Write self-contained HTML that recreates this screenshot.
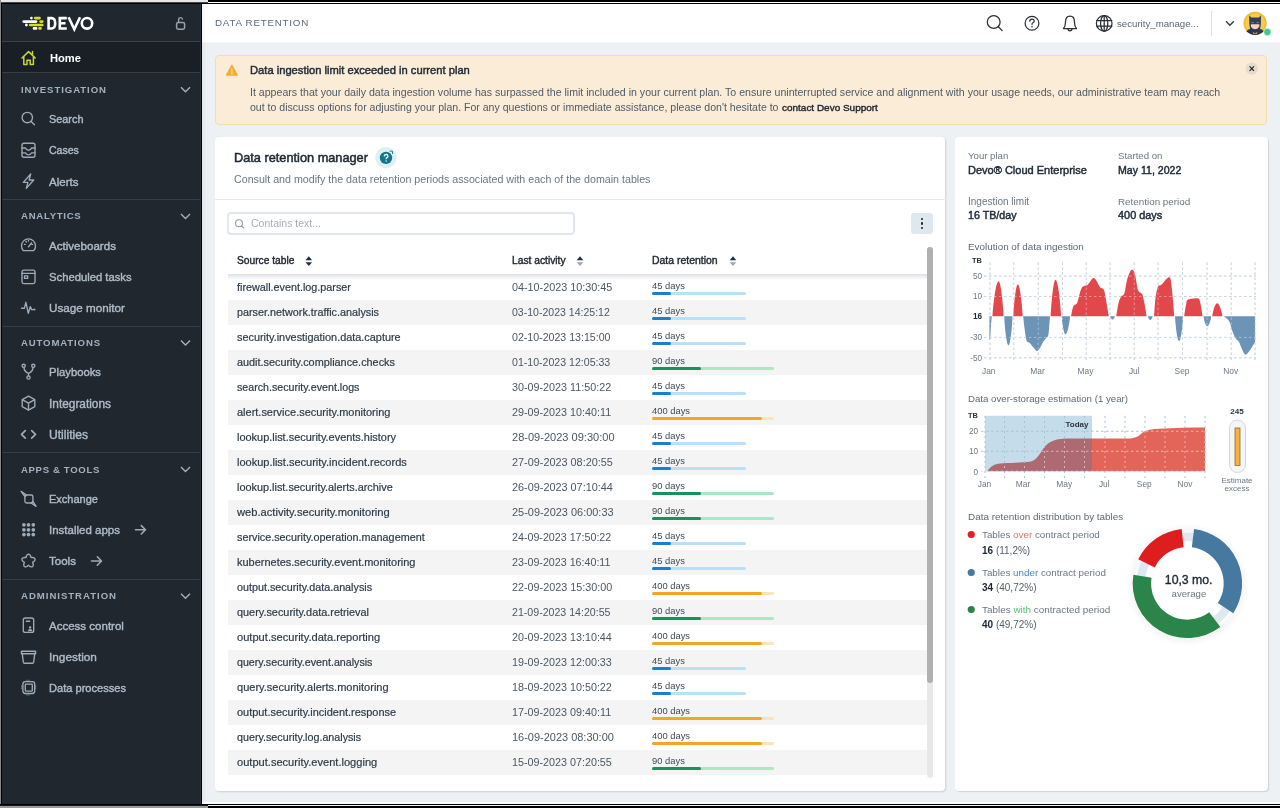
<!DOCTYPE html>
<html><head><meta charset="utf-8"><style>
html,body{margin:0;padding:0;}
body{width:1280px;height:808px;position:relative;overflow:hidden;background:#eef1f4;font-family:"Liberation Sans",sans-serif;}
.t{position:absolute;white-space:nowrap;will-change:transform;}
.r{position:absolute;}
svg{position:absolute;overflow:visible;}
</style></head><body>
<div class="r" style="left:0px;top:0px;width:208px;height:2px;background:#e8e8e8;"></div>
<div class="r" style="left:208px;top:0px;width:1072px;height:2px;background:#000;"></div>
<div class="r" style="left:0px;top:2px;width:208px;height:1px;background:#4a4a4a;"></div>
<div class="r" style="left:208px;top:2px;width:1072px;height:1px;background:#fff;"></div>
<div class="r" style="left:0px;top:3px;width:1280px;height:1px;background:#000;"></div>
<div class="r" style="left:0px;top:0px;width:1px;height:808px;background:#8a8a8a;"></div>
<div class="r" style="left:1px;top:3px;width:1px;height:802px;background:#000;"></div>
<div class="r" style="left:202px;top:802px;width:1078px;height:2px;background:#ffffff;"></div>
<div class="r" style="left:0px;top:804px;width:1280px;height:1px;background:#000;"></div>
<div class="r" style="left:0px;top:805px;width:208px;height:1px;background:#1a1a1a;"></div>
<div class="r" style="left:208px;top:805px;width:1072px;height:1px;background:#f4f4f4;"></div>
<div class="r" style="left:0px;top:806px;width:208px;height:2px;background:#9a9a9a;"></div>
<div class="r" style="left:208px;top:806px;width:1072px;height:2px;background:#000;"></div>
<div class="r" style="left:202px;top:4px;width:1078px;height:38px;background:#fff;"></div>
<div class="r" style="left:202px;top:42px;width:1078px;height:1px;background:#f5f7f9;"></div>
<div class="r" style="left:202px;top:43px;width:1078px;height:1px;background:#eceff2;"></div>
<div class="r" style="left:2px;top:4px;width:198px;height:800px;background:#20272f;box-shadow:3px 0 6px rgba(0,0,0,0.06);"></div>
<div class="r" style="left:200px;top:4px;width:1px;height:800px;background:#2b333b;"></div>
<div class="r" style="left:201px;top:4px;width:1px;height:800px;background:#000;"></div>
<div class="r" style="left:2px;top:41px;width:198px;height:1px;background:#3a434c;"></div>
<div class="r" style="left:2px;top:42px;width:198px;height:30px;background:#1a1f26;"></div>
<div class="r" style="left:2px;top:72px;width:198px;height:1px;background:#353e47;"></div>
<div class="r" style="left:2px;top:199px;width:198px;height:1px;background:#353e47;"></div>
<div class="r" style="left:2px;top:326px;width:198px;height:1px;background:#353e47;"></div>
<div class="r" style="left:2px;top:452px;width:198px;height:1px;background:#353e47;"></div>
<div class="r" style="left:2px;top:579px;width:198px;height:1px;background:#353e47;"></div>
<svg style="left:0;top:0" width="100" height="40"><circle cx="31.4" cy="18.1" r="1.4" fill="#ffffff"/><line x1="35.199999999999996" y1="18.1" x2="39.5" y2="18.1" stroke="#d3e11d" stroke-width="2.6" stroke-linecap="round"/><line x1="23.7" y1="21.6" x2="36.1" y2="21.6" stroke="#ffffff" stroke-width="2.6" stroke-linecap="round"/><line x1="40.55" y1="21.6" x2="42.300000000000004" y2="21.6" stroke="#d3e11d" stroke-width="2.6" stroke-linecap="round"/><circle cx="26.4" cy="25" r="1.4" fill="#ffffff"/><line x1="30.2" y1="25" x2="42.300000000000004" y2="25" stroke="#d3e11d" stroke-width="2.6" stroke-linecap="round"/><line x1="34.0" y1="28.4" x2="36.1" y2="28.4" stroke="#ffffff" stroke-width="2.6" stroke-linecap="round"/><line x1="40.55" y1="28.4" x2="39.5" y2="28.4" stroke="#d3e11d" stroke-width="2.6" stroke-linecap="round"/><path d="M48.6 18.1 L51.5 18.1 Q55.2 18.1 55.2 23.3 Q55.2 28.5 51.5 28.5 L48.6 28.5 Z" stroke="#ffffff" stroke-width="2.6" fill="none" stroke-linejoin="miter"/><path d="M66.8 18.1 L59.8 18.1 L59.8 28.5 L66.8 28.5 M59.8 23.3 L65.5 23.3" stroke="#ffffff" stroke-width="2.6" fill="none" stroke-linejoin="miter"/><path d="M68.6 17.3 L74.3 29.2 L80 17.3" stroke="#ffffff" stroke-width="2.6" fill="none" stroke-linejoin="miter"/><ellipse cx="87" cy="23.3" rx="5.2" ry="5.3" stroke="#ffffff" stroke-width="2.6" fill="none" stroke-linejoin="miter"/></svg>
<svg style="left:0;top:0" width="200" height="40"><rect x="176.6" y="22.6" width="8" height="6.6" rx="1.6" fill="none" stroke="#9aa3ab" stroke-width="1.5"/><path d="M178.6 22.6 L178.6 20 Q178.6 17.6 180.6 17.6 Q182.4 17.6 182.6 19.6" fill="none" stroke="#9aa3ab" stroke-width="1.4"/></svg>
<div class="t" style="left:49.50px;top:49.70px;font-size:11.158px;line-height:17px;color:#ffffff;font-weight:700;">Home</div>
<svg style="left:0;top:0" width="60" height="80"><path d="M22 58 L28.6 51.6 L35.2 58 M23.8 56.6 L23.8 64.6 L27 64.6 L27 60.3 L30.2 60.3 L30.2 64.6 L33.4 64.6 L33.4 56.6 M32.5 51.5 L32.5 54.5" fill="none" stroke="#c9d63a" stroke-width="1.5" stroke-linejoin="round" stroke-linecap="round"/></svg>
<div class="t" style="left:21.00px;top:82.80px;font-size:9.600px;line-height:14px;color:#a3b1be;font-weight:700;letter-spacing:0.926px;">INVESTIGATION</div>
<svg style="left:0;top:0" width="1" height="1"><path d="M181.0 87.3 L185.5 91.8 L190.0 87.3" fill="none" stroke="#a3b1be" stroke-width="1.4"/></svg>
<div class="t" style="left:48.80px;top:111.10px;font-size:10.888px;line-height:16px;color:#aebbc7;font-weight:400;-webkit-text-stroke:0.4px #aebbc7;">Search</div>
<svg style="left:0;top:0" width="1" height="1"><g transform="translate(28.5,118.8)"><circle cx="-1.2" cy="-1.3" r="5.2" fill="none" stroke="#9eabb7" stroke-width="1.35" stroke-linecap="round" stroke-linejoin="round"/><line x1="2.6" y1="2.6" x2="6" y2="6" fill="none" stroke="#9eabb7" stroke-width="1.35" stroke-linecap="round" stroke-linejoin="round"/></g></svg>
<div class="t" style="left:48.80px;top:142.30px;font-size:10.513px;line-height:16px;color:#aebbc7;font-weight:400;-webkit-text-stroke:0.4px #aebbc7;">Cases</div>
<svg style="left:0;top:0" width="1" height="1"><g transform="translate(28.5,149.99999999999997)"><rect x="-6.5" y="-6.8" width="13" height="14" rx="2" fill="none" stroke="#9eabb7" stroke-width="1.35" stroke-linecap="round" stroke-linejoin="round"/><path d="M-6.5 -2 L-3 -2 Q-2.3 0.2 0 0.2 Q2.3 0.2 3 -2 L6.5 -2 M-6.5 2.8 L-3 2.8 Q-2.3 4.8 0 4.8 Q2.3 4.8 3 2.8 L6.5 2.8" fill="none" stroke="#9eabb7" stroke-width="1.35" stroke-linecap="round" stroke-linejoin="round"/></g></svg>
<div class="t" style="left:48.80px;top:173.50px;font-size:11.540px;line-height:17px;color:#aebbc7;font-weight:400;-webkit-text-stroke:0.4px #aebbc7;">Alerts</div>
<svg style="left:0;top:0" width="1" height="1"><g transform="translate(28.5,181.2)"><path d="M2.2 -7.2 L-5.2 1.2 L-0.6 1.2 L-2.2 7.2 L5.2 -1.2 L0.6 -1.2 Z" fill="none" stroke="#9eabb7" stroke-width="1.35" stroke-linecap="round" stroke-linejoin="round"/></g></svg>
<div class="t" style="left:21.00px;top:209.40px;font-size:9.600px;line-height:14px;color:#a3b1be;font-weight:700;letter-spacing:0.716px;">ANALYTICS</div>
<svg style="left:0;top:0" width="1" height="1"><path d="M181.0 213.89999999999998 L185.5 218.39999999999998 L190.0 213.89999999999998" fill="none" stroke="#a3b1be" stroke-width="1.4"/></svg>
<div class="t" style="left:48.80px;top:237.70px;font-size:11.590px;line-height:17px;color:#aebbc7;font-weight:400;-webkit-text-stroke:0.4px #aebbc7;">Activeboards</div>
<svg style="left:0;top:0" width="1" height="1"><g transform="translate(28.5,245.39999999999998)"><path d="M-5.2 5.2 A7 7 0 1 1 5.2 5.2 Z" fill="none" stroke="#9eabb7" stroke-width="1.35" stroke-linecap="round" stroke-linejoin="round"/><line x1="0" y1="1.5" x2="3" y2="-2.5" fill="none" stroke="#9eabb7" stroke-width="1.35" stroke-linecap="round" stroke-linejoin="round"/><path d="M-4 -1 L-3.3 -1 M-2.5 -4 L-2 -3.4 M0 -5 L0 -4.3 M4 -1 L3.3 -1" fill="none" stroke="#9eabb7" stroke-width="1.35" stroke-linecap="round" stroke-linejoin="round"/></g></svg>
<div class="t" style="left:48.80px;top:268.90px;font-size:11.256px;line-height:17px;color:#aebbc7;font-weight:400;-webkit-text-stroke:0.4px #aebbc7;">Scheduled tasks</div>
<svg style="left:0;top:0" width="1" height="1"><g transform="translate(28.5,276.59999999999997)"><rect x="-6.5" y="-6.5" width="13" height="13.5" rx="1.8" fill="none" stroke="#9eabb7" stroke-width="1.35" stroke-linecap="round" stroke-linejoin="round"/><line x1="-6.5" y1="-3.2" x2="6.5" y2="-3.2" fill="none" stroke="#9eabb7" stroke-width="1.35" stroke-linecap="round" stroke-linejoin="round"/><rect x="-4" y="-0.8" width="3.2" height="2.6" fill="none" stroke="#9eabb7" stroke-width="1.35" stroke-linecap="round" stroke-linejoin="round"/></g></svg>
<div class="t" style="left:48.80px;top:299.10px;font-size:11.687px;line-height:18px;color:#aebbc7;font-weight:400;-webkit-text-stroke:0.4px #aebbc7;">Usage monitor</div>
<svg style="left:0;top:0" width="1" height="1"><g transform="translate(28.5,307.79999999999995)"><path d="M-7 0.5 L-4.2 0.5 L-2.6 -5.5 L-0.2 5.5 L1.8 -1.2 L3.2 1.8 L5 1.8" fill="none" stroke="#9eabb7" stroke-width="1.35" stroke-linecap="round" stroke-linejoin="round"/><circle cx="6" cy="1.8" r="1" fill="#9eabb7"/></g></svg>
<div class="t" style="left:21.00px;top:336.00px;font-size:9.600px;line-height:14px;color:#a3b1be;font-weight:700;letter-spacing:0.857px;">AUTOMATIONS</div>
<svg style="left:0;top:0" width="1" height="1"><path d="M181.0 340.5 L185.5 345.0 L190.0 340.5" fill="none" stroke="#a3b1be" stroke-width="1.4"/></svg>
<div class="t" style="left:48.80px;top:364.30px;font-size:11.270px;line-height:17px;color:#aebbc7;font-weight:400;-webkit-text-stroke:0.4px #aebbc7;">Playbooks</div>
<svg style="left:0;top:0" width="1" height="1"><g transform="translate(28.5,372.0)"><path d="M-4.6 -4.6 Q-4.3 -0.2 0 1.3 Q4.3 -0.2 4.6 -4.6 M0 1.3 L0 4" fill="none" stroke="#9eabb7" stroke-width="1.35" stroke-linecap="round" stroke-linejoin="round"/><circle cx="0" cy="5.5" r="1.6" fill="none" stroke="#9eabb7" stroke-width="1.35" stroke-linecap="round" stroke-linejoin="round"/><circle cx="-4.8" cy="-6.2" r="1.6" fill="none" stroke="#9eabb7" stroke-width="1.35" stroke-linecap="round" stroke-linejoin="round"/><circle cx="4.8" cy="-6.2" r="1.6" fill="none" stroke="#9eabb7" stroke-width="1.35" stroke-linecap="round" stroke-linejoin="round"/></g></svg>
<div class="t" style="left:48.80px;top:394.50px;font-size:11.864px;line-height:18px;color:#aebbc7;font-weight:400;-webkit-text-stroke:0.4px #aebbc7;">Integrations</div>
<svg style="left:0;top:0" width="1" height="1"><g transform="translate(28.5,403.2)"><path d="M0 -7 L6.3 -3.5 L6.3 3.5 L0 7 L-6.3 3.5 L-6.3 -3.5 Z M-6.3 -3.5 L0 0 L6.3 -3.5 M0 0 L0 7" fill="none" stroke="#9eabb7" stroke-width="1.35" stroke-linecap="round" stroke-linejoin="round"/></g></svg>
<div class="t" style="left:48.80px;top:425.70px;font-size:12.102px;line-height:18px;color:#aebbc7;font-weight:400;-webkit-text-stroke:0.4px #aebbc7;">Utilities</div>
<svg style="left:0;top:0" width="1" height="1"><g transform="translate(28.5,434.4)"><path d="M-3.2 -3.8 L-7 0 L-3.2 3.8 M3.2 -3.8 L7 0 L3.2 3.8" fill="none" stroke="#9eabb7" stroke-width="1.7" stroke-linecap="round" stroke-linejoin="round"/></g></svg>
<div class="t" style="left:21.00px;top:462.60px;font-size:9.600px;line-height:14px;color:#a3b1be;font-weight:700;letter-spacing:0.641px;">APPS &amp; TOOLS</div>
<svg style="left:0;top:0" width="1" height="1"><path d="M181.0 467.1 L185.5 471.6 L190.0 467.1" fill="none" stroke="#a3b1be" stroke-width="1.4"/></svg>
<div class="t" style="left:48.80px;top:490.90px;font-size:11.016px;line-height:17px;color:#aebbc7;font-weight:400;-webkit-text-stroke:0.4px #aebbc7;">Exchange</div>
<svg style="left:0;top:0" width="1" height="1"><g transform="translate(28.5,498.6)"><rect x="-3.6" y="-3.6" width="8" height="8" rx="1.8" fill="none" stroke="#9eabb7" stroke-width="1.35" stroke-linecap="round" stroke-linejoin="round"/><path d="M-3.6 -2 L-7.4 -7.2 L-2 -3.6 Z" fill="none" stroke="#9eabb7" stroke-width="1.35" stroke-linecap="round" stroke-linejoin="round"/><path d="M4.4 2.8 L7.6 7.8 L2.6 4.4 Z" fill="none" stroke="#9eabb7" stroke-width="1.35" stroke-linecap="round" stroke-linejoin="round"/></g></svg>
<div class="t" style="left:48.80px;top:522.10px;font-size:11.505px;line-height:17px;color:#aebbc7;font-weight:400;-webkit-text-stroke:0.4px #aebbc7;">Installed apps</div>
<svg style="left:0;top:0" width="1" height="1"><g transform="translate(28.5,529.8000000000001)"><circle cx="-4.6" cy="-5" r="1.85" fill="#9eabb7"/><circle cx="-4.6" cy="0" r="1.85" fill="#9eabb7"/><circle cx="-4.6" cy="4.8" r="1.85" fill="#9eabb7"/><circle cx="0" cy="-5" r="1.85" fill="#9eabb7"/><circle cx="0" cy="0" r="1.85" fill="#9eabb7"/><circle cx="0" cy="4.8" r="1.85" fill="#9eabb7"/><circle cx="4.8" cy="-5" r="1.85" fill="#9eabb7"/><circle cx="4.8" cy="0" r="1.85" fill="#9eabb7"/><circle cx="4.8" cy="4.8" r="1.85" fill="#9eabb7"/></g></svg>
<svg style="left:0;top:0" width="1" height="1"><path d="M135.5 529.8000000000001 L145.5 529.8000000000001 M141.3 525.6 L145.5 529.8000000000001 L141.3 534.0000000000001" fill="none" stroke="#9eabb7" stroke-width="1.6" stroke-linecap="round" stroke-linejoin="round"/></svg>
<div class="t" style="left:48.80px;top:553.30px;font-size:11.565px;line-height:17px;color:#aebbc7;font-weight:400;-webkit-text-stroke:0.4px #aebbc7;">Tools</div>
<svg style="left:0;top:0" width="1" height="1"><g transform="translate(28.5,561.0000000000001)"><path d="M5.84 0.00 L5.33 0.47 L4.78 0.84 L4.29 1.15 L4.12 1.50 L4.32 2.01 L4.54 2.62 L4.71 3.29 L4.74 3.98 L4.62 4.62 L4.34 5.17 L3.90 5.57 L3.34 5.79 L2.71 5.81 L2.06 5.66 L1.44 5.36 L0.88 4.97 L0.40 4.58 L0.00 4.30 L-0.40 4.58 L-0.88 4.97 L-1.44 5.36 L-2.06 5.66 L-2.71 5.81 L-3.34 5.79 L-3.90 5.57 L-4.34 5.17 L-4.62 4.62 L-4.74 3.98 L-4.71 3.29 L-4.54 2.62 L-4.32 2.01 L-4.12 1.50 L-4.29 1.15 L-4.78 0.84 L-5.33 0.47 L-5.84 0.00 L-6.25 -0.55 L-6.49 -1.14 L-6.54 -1.75 L-6.38 -2.32 L-6.02 -2.81 L-5.49 -3.17 L-4.86 -3.40 L-4.17 -3.50 L-3.50 -3.50 L-2.90 -3.46 L-2.48 -3.55 L-2.34 -4.05 L-2.18 -4.67 L-1.93 -5.31 L-1.58 -5.90 L-1.12 -6.38 L-0.59 -6.69 L-0.00 -6.80 L0.59 -6.69 L1.12 -6.38 L1.58 -5.90 L1.93 -5.31 L2.18 -4.67 L2.34 -4.05 L2.48 -3.55 L2.90 -3.46 L3.50 -3.50 L4.17 -3.50 L4.86 -3.40 L5.49 -3.17 L6.02 -2.81 L6.38 -2.32 L6.54 -1.75 L6.49 -1.14 L6.25 -0.55 L5.84 -0.00 Z" fill="none" stroke="#9eabb7" stroke-width="1.35" stroke-linecap="round" stroke-linejoin="round"/></g></svg>
<svg style="left:0;top:0" width="1" height="1"><path d="M91.5 561.0000000000001 L101.5 561.0000000000001 M97.3 556.8000000000001 L101.5 561.0000000000001 L97.3 565.2000000000002" fill="none" stroke="#9eabb7" stroke-width="1.6" stroke-linecap="round" stroke-linejoin="round"/></svg>
<div class="t" style="left:21.00px;top:589.20px;font-size:9.600px;line-height:14px;color:#a3b1be;font-weight:700;letter-spacing:0.966px;">ADMINISTRATION</div>
<svg style="left:0;top:0" width="1" height="1"><path d="M181.0 593.7 L185.5 598.2 L190.0 593.7" fill="none" stroke="#a3b1be" stroke-width="1.4"/></svg>
<div class="t" style="left:48.80px;top:617.50px;font-size:11.534px;line-height:17px;color:#aebbc7;font-weight:400;-webkit-text-stroke:0.4px #aebbc7;">Access control</div>
<svg style="left:0;top:0" width="1" height="1"><g transform="translate(28.5,625.2)"><rect x="-5.2" y="-7.2" width="10.4" height="14.4" rx="2" fill="none" stroke="#9eabb7" stroke-width="1.35" stroke-linecap="round" stroke-linejoin="round"/><line x1="-2.2" y1="-4" x2="1.2" y2="-4" fill="none" stroke="#9eabb7" stroke-width="1.35" stroke-linecap="round" stroke-linejoin="round"/><circle cx="1.6" cy="2.2" r="1.2" fill="#9eabb7"/><path d="M-0.8 6 Q-0.5 3.8 1.6 3.8 Q3.7 3.8 4 6 Z" fill="#9eabb7"/></g></svg>
<div class="t" style="left:48.80px;top:647.70px;font-size:11.827px;line-height:18px;color:#aebbc7;font-weight:400;-webkit-text-stroke:0.4px #aebbc7;">Ingestion</div>
<svg style="left:0;top:0" width="1" height="1"><g transform="translate(28.5,656.4000000000001)"><path d="M-7 -5.2 L7 -5.2 L7 -2.6 L-7 -2.6 Z" fill="none" stroke="#9eabb7" stroke-width="1.5" stroke-linejoin="round"/><path d="M-6.2 -2.6 L-5.2 5.8 Q-5 6.8 -4 6.8 L4 6.8 Q5 6.8 5.2 5.8 L6.2 -2.6" fill="none" stroke="#9eabb7" stroke-width="1.35" stroke-linecap="round" stroke-linejoin="round"/></g></svg>
<div class="t" style="left:48.80px;top:679.90px;font-size:11.083px;line-height:17px;color:#aebbc7;font-weight:400;-webkit-text-stroke:0.4px #aebbc7;">Data processes</div>
<svg style="left:0;top:0" width="1" height="1"><g transform="translate(28.5,687.6)"><rect x="-5.6" y="-5.9" width="11.8" height="11.8" rx="2.4" fill="none" stroke="#9eabb7" stroke-width="1.35" stroke-linecap="round" stroke-linejoin="round"/><rect x="-3.2" y="-3.5" width="7" height="7" rx="0.6" fill="none" stroke="#9eabb7" stroke-width="1.35" stroke-linecap="round" stroke-linejoin="round"/><path d="M-7 -2 L-7 2 M7.2 -2 L7.2 2 M-2 -7.3 L2 -7.3 M-2 7.3 L2 7.3" fill="none" stroke="#9eabb7" stroke-width="0.9" stroke-dasharray="1 1"/></g></svg>
<div class="t" style="left:215.30px;top:15.40px;font-size:9.800px;line-height:15px;color:#5c6b7a;font-weight:400;letter-spacing:0.751px;">DATA RETENTION</div>
<svg style="left:0;top:0" width="1" height="1"><circle cx="993.7" cy="22" r="6.4" fill="none" stroke="#2b2f33" stroke-width="1.25" stroke-linecap="round"/><line x1="998.4" y1="26.7" x2="1002.2" y2="30.6" fill="none" stroke="#2b2f33" stroke-width="1.25" stroke-linecap="round"/><circle cx="1032" cy="23.3" r="6.9" fill="none" stroke="#2b2f33" stroke-width="1.25" stroke-linecap="round"/><path d="M1029.8 21.2 Q1029.8 19 1032 19 Q1034.2 19 1034.2 21 Q1034.2 22.4 1032.6 23 Q1032 23.3 1032 24.6" fill="none" stroke="#2b2f33" stroke-width="1.25" stroke-linecap="round"/><circle cx="1032" cy="26.8" r="0.8" fill="#2b2f33"/><path d="M1063.5 28.5 Q1065.5 26.5 1065.5 22 Q1065.5 16.2 1070 16.2 Q1074.5 16.2 1074.5 22 Q1074.5 26.5 1076.5 28.5 Z M1068 28.8 Q1068 30.8 1070 30.8 Q1072 30.8 1072 28.8" fill="none" stroke="#2b2f33" stroke-width="1.25" stroke-linecap="round" stroke-linejoin="round"/><circle cx="1104.2" cy="23.4" r="7.8" fill="none" stroke="#2b2f33" stroke-width="1.25" stroke-linecap="round"/><ellipse cx="1104.2" cy="23.4" rx="3.6" ry="7.8" fill="none" stroke="#2b2f33" stroke-width="1.25" stroke-linecap="round"/><path d="M1096.6 20.6 L1111.8 20.6 M1096.6 26.2 L1111.8 26.2 M1104.2 15.6 L1104.2 31.2" fill="none" stroke="#2b2f33" stroke-width="1.25" stroke-linecap="round"/></svg>
<div class="t" style="left:1116.60px;top:15.50px;font-size:9.670px;line-height:15px;color:#5b6874;font-weight:400;">security_manage...</div>
<div class="r" style="left:1211px;top:11px;width:1px;height:25px;background:#d9e1e8;"></div>
<svg style="left:0;top:0" width="1" height="1"><path d="M1226 21.2 L1229.9 25.2 L1233.8 21.2" fill="none" stroke="#2d3b4a" stroke-width="1.3"/><circle cx="1255.1" cy="23.3" r="11.6" fill="#f2bf2a"/><circle cx="1255.1" cy="23.3" r="9.8" fill="#f4cc55"/><path d="M1246.3 31.2 Q1248 29.2 1251 28.8 L1259.2 28.8 Q1262.2 29.2 1263.9 31.2 Q1260.2 34.9 1255.1 34.9 Q1250 34.9 1246.3 31.2 Z" fill="#2b3556"/><path d="M1249.2 15.2 L1251.2 17.4 L1259 17.4 L1261 15.2 L1260.9 24 L1260 29.5 L1250.2 29.5 L1249.3 24 Z" fill="#353d5c"/><path d="M1250.8 24.3 L1259.4 24.3 L1259.2 26.5 Q1258.4 29 1255.1 29.2 Q1251.8 29 1251 26.5 Z" fill="#f6d2bf"/><path d="M1250.6 22.6 L1253.6 22.4 L1253.4 23.2 Z M1259.6 22.6 L1256.6 22.4 L1256.8 23.2 Z" fill="#c9ccd8"/><path d="M1252.8 32 L1255.1 33.2 L1257.4 32 L1256.8 33.8 L1253.4 33.8 Z" fill="#f2c12e"/><circle cx="1267.4" cy="32" r="3.7" fill="#3cc98a" stroke="#fff" stroke-width="0.6"/></svg>
<div class="r" style="left:215px;top:55px;width:1052px;height:70px;background:#fbecd7;border:1px solid #f7dcae;box-sizing:border-box;border-radius:4px;"></div>
<svg style="left:0;top:0" width="1" height="1"><path d="M231.9 65.4 L237.3 75.1 L226.5 75.1 Z" fill="#f4ad35" stroke="#f4ad35" stroke-width="1.3" stroke-linejoin="round"/><line x1="231.9" y1="68.3" x2="231.9" y2="74.6" stroke="#f9d89c" stroke-width="1.1"/></svg>
<div class="t" style="left:249.70px;top:62.30px;font-size:11.180px;line-height:17px;color:#1f2a36;font-weight:400;-webkit-text-stroke:0.45px #1f2a36;">Data ingestion limit exceeded in current plan</div>
<div class="t" style="left:249.70px;top:83.90px;font-size:10.602px;line-height:16px;color:#4d5a67;font-weight:400;">It appears that your daily data ingestion volume has surpassed the limit included in your current plan. To ensure uninterrupted service and alignment with your usage needs, our administrative team may reach</div>
<div class="t" style="left:249.70px;top:98.80px;font-size:10.567px;line-height:16px;color:#4d5a67;font-weight:400;">out to discuss options for adjusting your plan. For any questions or immediate assistance, please don't hesitate to</div>
<div class="t" style="left:782.20px;top:99.80px;font-size:9.982px;line-height:15px;color:#1d2630;font-weight:400;-webkit-text-stroke:0.4px #1d2630;">contact Devo Support</div>
<svg style="left:0;top:0" width="1" height="1"><circle cx="1251.8" cy="68.6" r="6.2" fill="#e7dccb"/><path d="M1249.6 66.4 L1254 70.8 M1254 66.4 L1249.6 70.8" stroke="#1d2630" stroke-width="1.2"/></svg>
<div class="r" style="left:215px;top:137px;width:730px;height:654px;background:#fff;border-radius:4px;box-shadow:1px 1px 2px rgba(60,80,100,0.2);"></div>
<div class="t" style="left:234.30px;top:147.80px;font-size:12.754px;line-height:19px;color:#1d2630;font-weight:400;-webkit-text-stroke:0.5px #1d2630;">Data retention manager</div>
<svg style="left:0;top:0" width="1" height="1"><circle cx="386" cy="157.6" r="10.7" fill="#dff0f2"/><circle cx="386" cy="157.9" r="6.2" fill="#14758a"/><path d="M384.3 156.4 Q384.3 154.5 386.1 154.5 Q387.9 154.5 387.9 156.2 Q387.9 157.4 386.6 157.9 Q386.1 158.2 386.1 159.2" fill="none" stroke="#e8f4f6" stroke-width="1.3"/><circle cx="386.1" cy="161" r="0.8" fill="#e8f4f6"/><path d="M389.6 151.2 L392.5 151.2 L392.5 154" fill="none" stroke="#14758a" stroke-width="0.9"/></svg>
<div class="t" style="left:234.00px;top:170.90px;font-size:10.686px;line-height:16px;color:#6a7783;font-weight:400;">Consult and modify the data retention periods associated with each of the domain tables</div>
<div class="r" style="left:215px;top:199px;width:731px;height:1px;background:#e6ebf0;"></div>
<div class="r" style="left:227px;top:212px;width:348px;height:23px;background:#fff;border:2px solid #e0e7ee;box-sizing:border-box;border-radius:4px;"></div>
<svg style="left:0;top:0" width="1" height="1"><circle cx="239" cy="223.3" r="3.5" fill="none" stroke="#8e9dac" stroke-width="1.1" stroke-linecap="round"/><line x1="241.6" y1="226" x2="243.8" y2="228.2" fill="none" stroke="#8e9dac" stroke-width="1.1" stroke-linecap="round"/></svg>
<div class="t" style="left:251.00px;top:215.60px;font-size:10.495px;line-height:16px;color:#a3afbb;font-weight:400;">Contains text...</div>
<div class="r" style="left:911px;top:213px;width:22px;height:21px;background:#e0e8ef;border-radius:3px;"></div>
<div class="r" style="left:920.6px;top:217.6px;width:2.8px;height:2.8px;border-radius:50%;background:#1b2630"></div>
<div class="r" style="left:920.6px;top:222.1px;width:2.8px;height:2.8px;border-radius:50%;background:#1b2630"></div>
<div class="r" style="left:920.6px;top:226.6px;width:2.8px;height:2.8px;border-radius:50%;background:#1b2630"></div>
<div class="t" style="left:237.30px;top:253.20px;font-size:10.241px;line-height:15px;color:#1d2630;font-weight:400;-webkit-text-stroke:0.4px #1d2630;">Source table</div>
<div class="t" style="left:511.50px;top:253.10px;font-size:10.260px;line-height:15px;color:#1d2630;font-weight:400;-webkit-text-stroke:0.4px #1d2630;">Last activity</div>
<div class="t" style="left:652.30px;top:253.10px;font-size:10.459px;line-height:16px;color:#1d2630;font-weight:400;-webkit-text-stroke:0.4px #1d2630;">Data retention</div>
<svg style="left:0;top:0" width="1" height="1"><path d="M305.5 260.2 L308.8 256.2 L312.1 260.2 Z" fill="#1d3040"/><path d="M305.5 262.2 L308.8 266.0 L312.1 262.2 Z" fill="#1d3040"/></svg>
<svg style="left:0;top:0" width="1" height="1"><path d="M576.7 260.2 L580 256.2 L583.3 260.2 Z" fill="#1d3040"/><path d="M576.7 262.2 L580 266.0 L583.3 262.2 Z" fill="#9ba6b1"/></svg>
<svg style="left:0;top:0" width="1" height="1"><path d="M729.7 260.2 L733 256.2 L736.3 260.2 Z" fill="#1d3040"/><path d="M729.7 262.2 L733 266.0 L736.3 262.2 Z" fill="#9ba6b1"/></svg>
<div class="r" style="left:228px;top:274px;width:699px;height:6px;background:linear-gradient(#dde1e4,#ffffff);"></div>
<div class="t" style="left:237.30px;top:278.60px;font-size:10.795px;line-height:16px;color:#2c3a47;font-weight:400;-webkit-text-stroke:0.2px #2c3a47;">firewall.event.log.parser</div>
<div class="t" style="left:511.50px;top:278.60px;font-size:10.801px;line-height:16px;color:#4b5763;font-weight:400;">04-10-2023 10:30:45</div>
<div class="t" style="left:652.00px;top:278.70px;font-size:9.400px;line-height:14px;color:#3e4a56;font-weight:400;">45 days</div>
<div class="r" style="left:652px;top:292.3px;width:93.5px;height:2.8px;background:#b9e0f7;border-radius:2px;"></div>
<div class="r" style="left:652px;top:292.3px;width:18.5px;height:2.8px;background:#1a7fcf;border-radius:2px;"></div>
<div class="r" style="left:228px;top:300px;width:699px;height:25px;background:#f4f4f4;"></div>
<div class="t" style="left:237.30px;top:303.60px;font-size:10.803px;line-height:16px;color:#2c3a47;font-weight:400;-webkit-text-stroke:0.2px #2c3a47;">parser.network.traffic.analysis</div>
<div class="t" style="left:511.50px;top:303.60px;font-size:10.543px;line-height:16px;color:#4b5763;font-weight:400;">03-10-2023 14:25:12</div>
<div class="t" style="left:652.00px;top:303.70px;font-size:9.400px;line-height:14px;color:#3e4a56;font-weight:400;">45 days</div>
<div class="r" style="left:652px;top:317.3px;width:93.5px;height:2.8px;background:#b9e0f7;border-radius:2px;"></div>
<div class="r" style="left:652px;top:317.3px;width:18.5px;height:2.8px;background:#1a7fcf;border-radius:2px;"></div>
<div class="t" style="left:237.30px;top:328.60px;font-size:10.887px;line-height:16px;color:#2c3a47;font-weight:400;-webkit-text-stroke:0.2px #2c3a47;">security.investigation.data.capture</div>
<div class="t" style="left:511.50px;top:328.60px;font-size:10.618px;line-height:16px;color:#4b5763;font-weight:400;">02-10-2023 13:15:00</div>
<div class="t" style="left:652.00px;top:328.70px;font-size:9.400px;line-height:14px;color:#3e4a56;font-weight:400;">45 days</div>
<div class="r" style="left:652px;top:342.3px;width:93.5px;height:2.8px;background:#b9e0f7;border-radius:2px;"></div>
<div class="r" style="left:652px;top:342.3px;width:18.5px;height:2.8px;background:#1a7fcf;border-radius:2px;"></div>
<div class="r" style="left:228px;top:350px;width:699px;height:25px;background:#f4f4f4;"></div>
<div class="t" style="left:237.30px;top:353.60px;font-size:10.864px;line-height:16px;color:#2c3a47;font-weight:400;-webkit-text-stroke:0.2px #2c3a47;">audit.security.compliance.checks</div>
<div class="t" style="left:511.50px;top:353.60px;font-size:10.586px;line-height:16px;color:#4b5763;font-weight:400;">01-10-2023 12:05:33</div>
<div class="t" style="left:652.00px;top:353.70px;font-size:9.400px;line-height:14px;color:#3e4a56;font-weight:400;">90 days</div>
<div class="r" style="left:652px;top:367.3px;width:121.5px;height:2.8px;background:#a9e8c3;border-radius:2px;"></div>
<div class="r" style="left:652px;top:367.3px;width:48.5px;height:2.8px;background:#13945a;border-radius:2px;"></div>
<div class="t" style="left:237.30px;top:378.60px;font-size:10.664px;line-height:16px;color:#2c3a47;font-weight:400;-webkit-text-stroke:0.2px #2c3a47;">search.security.event.logs</div>
<div class="t" style="left:511.50px;top:378.60px;font-size:10.780px;line-height:16px;color:#4b5763;font-weight:400;">30-09-2023 11:50:22</div>
<div class="t" style="left:652.00px;top:378.70px;font-size:9.400px;line-height:14px;color:#3e4a56;font-weight:400;">45 days</div>
<div class="r" style="left:652px;top:392.3px;width:93.5px;height:2.8px;background:#b9e0f7;border-radius:2px;"></div>
<div class="r" style="left:652px;top:392.3px;width:18.5px;height:2.8px;background:#1a7fcf;border-radius:2px;"></div>
<div class="r" style="left:228px;top:400px;width:699px;height:25px;background:#f4f4f4;"></div>
<div class="t" style="left:237.30px;top:403.60px;font-size:10.975px;line-height:16px;color:#2c3a47;font-weight:400;-webkit-text-stroke:0.2px #2c3a47;">alert.service.security.monitoring</div>
<div class="t" style="left:511.50px;top:403.60px;font-size:10.780px;line-height:16px;color:#4b5763;font-weight:400;">29-09-2023 10:40:11</div>
<div class="t" style="left:652.00px;top:403.70px;font-size:9.400px;line-height:14px;color:#3e4a56;font-weight:400;">400 days</div>
<div class="r" style="left:652px;top:417.3px;width:121.5px;height:2.8px;background:#fde3b8;border-radius:2px;"></div>
<div class="r" style="left:652px;top:417.3px;width:109.5px;height:2.8px;background:#f4a623;border-radius:2px;"></div>
<div class="t" style="left:237.30px;top:428.60px;font-size:10.954px;line-height:16px;color:#2c3a47;font-weight:400;-webkit-text-stroke:0.2px #2c3a47;">lookup.list.security.events.history</div>
<div class="t" style="left:511.50px;top:428.60px;font-size:11.060px;line-height:17px;color:#4b5763;font-weight:400;">28-09-2023 09:30:00</div>
<div class="t" style="left:652.00px;top:428.70px;font-size:9.400px;line-height:14px;color:#3e4a56;font-weight:400;">45 days</div>
<div class="r" style="left:652px;top:442.3px;width:93.5px;height:2.8px;background:#b9e0f7;border-radius:2px;"></div>
<div class="r" style="left:652px;top:442.3px;width:18.5px;height:2.8px;background:#1a7fcf;border-radius:2px;"></div>
<div class="r" style="left:228px;top:450px;width:699px;height:25px;background:#f4f4f4;"></div>
<div class="t" style="left:237.30px;top:453.60px;font-size:11.015px;line-height:17px;color:#2c3a47;font-weight:400;-webkit-text-stroke:0.2px #2c3a47;">lookup.list.security.incident.records</div>
<div class="t" style="left:511.50px;top:453.60px;font-size:10.877px;line-height:16px;color:#4b5763;font-weight:400;">27-09-2023 08:20:55</div>
<div class="t" style="left:652.00px;top:453.70px;font-size:9.400px;line-height:14px;color:#3e4a56;font-weight:400;">45 days</div>
<div class="r" style="left:652px;top:467.3px;width:93.5px;height:2.8px;background:#b9e0f7;border-radius:2px;"></div>
<div class="r" style="left:652px;top:467.3px;width:18.5px;height:2.8px;background:#1a7fcf;border-radius:2px;"></div>
<div class="t" style="left:237.30px;top:478.60px;font-size:10.886px;line-height:16px;color:#2c3a47;font-weight:400;-webkit-text-stroke:0.2px #2c3a47;">lookup.list.security.alerts.archive</div>
<div class="t" style="left:511.50px;top:478.60px;font-size:10.877px;line-height:16px;color:#4b5763;font-weight:400;">26-09-2023 07:10:44</div>
<div class="t" style="left:652.00px;top:478.70px;font-size:9.400px;line-height:14px;color:#3e4a56;font-weight:400;">90 days</div>
<div class="r" style="left:652px;top:492.3px;width:121.5px;height:2.8px;background:#a9e8c3;border-radius:2px;"></div>
<div class="r" style="left:652px;top:492.3px;width:48.5px;height:2.8px;background:#13945a;border-radius:2px;"></div>
<div class="r" style="left:228px;top:500px;width:699px;height:25px;background:#f4f4f4;"></div>
<div class="t" style="left:237.30px;top:503.60px;font-size:11.161px;line-height:17px;color:#2c3a47;font-weight:400;-webkit-text-stroke:0.2px #2c3a47;">web.activity.security.monitoring</div>
<div class="t" style="left:511.50px;top:503.60px;font-size:10.952px;line-height:16px;color:#4b5763;font-weight:400;">25-09-2023 06:00:33</div>
<div class="t" style="left:652.00px;top:503.70px;font-size:9.400px;line-height:14px;color:#3e4a56;font-weight:400;">90 days</div>
<div class="r" style="left:652px;top:517.3px;width:121.5px;height:2.8px;background:#a9e8c3;border-radius:2px;"></div>
<div class="r" style="left:652px;top:517.3px;width:48.5px;height:2.8px;background:#13945a;border-radius:2px;"></div>
<div class="t" style="left:237.30px;top:528.60px;font-size:10.812px;line-height:16px;color:#2c3a47;font-weight:400;-webkit-text-stroke:0.2px #2c3a47;">service.security.operation.management</div>
<div class="t" style="left:511.50px;top:528.60px;font-size:10.694px;line-height:16px;color:#4b5763;font-weight:400;">24-09-2023 17:50:22</div>
<div class="t" style="left:652.00px;top:528.70px;font-size:9.400px;line-height:14px;color:#3e4a56;font-weight:400;">45 days</div>
<div class="r" style="left:652px;top:542.3px;width:93.5px;height:2.8px;background:#b9e0f7;border-radius:2px;"></div>
<div class="r" style="left:652px;top:542.3px;width:18.5px;height:2.8px;background:#1a7fcf;border-radius:2px;"></div>
<div class="r" style="left:228px;top:550px;width:699px;height:25px;background:#f4f4f4;"></div>
<div class="t" style="left:237.30px;top:553.60px;font-size:10.979px;line-height:16px;color:#2c3a47;font-weight:400;-webkit-text-stroke:0.2px #2c3a47;">kubernetes.security.event.monitoring</div>
<div class="t" style="left:511.50px;top:553.60px;font-size:10.704px;line-height:16px;color:#4b5763;font-weight:400;">23-09-2023 16:40:11</div>
<div class="t" style="left:652.00px;top:553.70px;font-size:9.400px;line-height:14px;color:#3e4a56;font-weight:400;">45 days</div>
<div class="r" style="left:652px;top:567.3px;width:93.5px;height:2.8px;background:#b9e0f7;border-radius:2px;"></div>
<div class="r" style="left:652px;top:567.3px;width:18.5px;height:2.8px;background:#1a7fcf;border-radius:2px;"></div>
<div class="t" style="left:237.30px;top:578.60px;font-size:10.786px;line-height:16px;color:#2c3a47;font-weight:400;-webkit-text-stroke:0.2px #2c3a47;">output.security.data.analysis</div>
<div class="t" style="left:511.50px;top:578.60px;font-size:10.801px;line-height:16px;color:#4b5763;font-weight:400;">22-09-2023 15:30:00</div>
<div class="t" style="left:652.00px;top:578.70px;font-size:9.400px;line-height:14px;color:#3e4a56;font-weight:400;">400 days</div>
<div class="r" style="left:652px;top:592.3px;width:121.5px;height:2.8px;background:#fde3b8;border-radius:2px;"></div>
<div class="r" style="left:652px;top:592.3px;width:109.5px;height:2.8px;background:#f4a623;border-radius:2px;"></div>
<div class="r" style="left:228px;top:600px;width:699px;height:25px;background:#f4f4f4;"></div>
<div class="t" style="left:237.30px;top:603.60px;font-size:10.894px;line-height:16px;color:#2c3a47;font-weight:400;-webkit-text-stroke:0.2px #2c3a47;">query.security.data.retrieval</div>
<div class="t" style="left:511.50px;top:603.60px;font-size:10.618px;line-height:16px;color:#4b5763;font-weight:400;">21-09-2023 14:20:55</div>
<div class="t" style="left:652.00px;top:603.70px;font-size:9.400px;line-height:14px;color:#3e4a56;font-weight:400;">90 days</div>
<div class="r" style="left:652px;top:617.3px;width:121.5px;height:2.8px;background:#a9e8c3;border-radius:2px;"></div>
<div class="r" style="left:652px;top:617.3px;width:48.5px;height:2.8px;background:#13945a;border-radius:2px;"></div>
<div class="t" style="left:237.30px;top:628.60px;font-size:11.120px;line-height:17px;color:#2c3a47;font-weight:400;-webkit-text-stroke:0.2px #2c3a47;">output.security.data.reporting</div>
<div class="t" style="left:511.50px;top:628.60px;font-size:10.769px;line-height:16px;color:#4b5763;font-weight:400;">20-09-2023 13:10:44</div>
<div class="t" style="left:652.00px;top:628.70px;font-size:9.400px;line-height:14px;color:#3e4a56;font-weight:400;">400 days</div>
<div class="r" style="left:652px;top:642.3px;width:121.5px;height:2.8px;background:#fde3b8;border-radius:2px;"></div>
<div class="r" style="left:652px;top:642.3px;width:109.5px;height:2.8px;background:#f4a623;border-radius:2px;"></div>
<div class="r" style="left:228px;top:650px;width:699px;height:25px;background:#f4f4f4;"></div>
<div class="t" style="left:237.30px;top:653.60px;font-size:10.685px;line-height:16px;color:#2c3a47;font-weight:400;-webkit-text-stroke:0.2px #2c3a47;">query.security.event.analysis</div>
<div class="t" style="left:511.50px;top:653.60px;font-size:10.769px;line-height:16px;color:#4b5763;font-weight:400;">19-09-2023 12:00:33</div>
<div class="t" style="left:652.00px;top:653.70px;font-size:9.400px;line-height:14px;color:#3e4a56;font-weight:400;">45 days</div>
<div class="r" style="left:652px;top:667.3px;width:93.5px;height:2.8px;background:#b9e0f7;border-radius:2px;"></div>
<div class="r" style="left:652px;top:667.3px;width:18.5px;height:2.8px;background:#1a7fcf;border-radius:2px;"></div>
<div class="t" style="left:237.30px;top:678.60px;font-size:11.043px;line-height:17px;color:#2c3a47;font-weight:400;-webkit-text-stroke:0.2px #2c3a47;">query.security.alerts.monitoring</div>
<div class="t" style="left:511.50px;top:678.60px;font-size:10.769px;line-height:16px;color:#4b5763;font-weight:400;">18-09-2023 10:50:22</div>
<div class="t" style="left:652.00px;top:678.70px;font-size:9.400px;line-height:14px;color:#3e4a56;font-weight:400;">45 days</div>
<div class="r" style="left:652px;top:692.3px;width:93.5px;height:2.8px;background:#b9e0f7;border-radius:2px;"></div>
<div class="r" style="left:652px;top:692.3px;width:18.5px;height:2.8px;background:#1a7fcf;border-radius:2px;"></div>
<div class="r" style="left:228px;top:700px;width:699px;height:25px;background:#f4f4f4;"></div>
<div class="t" style="left:237.30px;top:703.60px;font-size:10.952px;line-height:16px;color:#2c3a47;font-weight:400;-webkit-text-stroke:0.2px #2c3a47;">output.security.incident.response</div>
<div class="t" style="left:511.50px;top:703.60px;font-size:10.780px;line-height:16px;color:#4b5763;font-weight:400;">17-09-2023 09:40:11</div>
<div class="t" style="left:652.00px;top:703.70px;font-size:9.400px;line-height:14px;color:#3e4a56;font-weight:400;">400 days</div>
<div class="r" style="left:652px;top:717.3px;width:121.5px;height:2.8px;background:#fde3b8;border-radius:2px;"></div>
<div class="r" style="left:652px;top:717.3px;width:109.5px;height:2.8px;background:#f4a623;border-radius:2px;"></div>
<div class="t" style="left:237.30px;top:728.60px;font-size:10.735px;line-height:16px;color:#2c3a47;font-weight:400;-webkit-text-stroke:0.2px #2c3a47;">query.security.log.analysis</div>
<div class="t" style="left:511.50px;top:728.60px;font-size:10.984px;line-height:16px;color:#4b5763;font-weight:400;">16-09-2023 08:30:00</div>
<div class="t" style="left:652.00px;top:728.70px;font-size:9.400px;line-height:14px;color:#3e4a56;font-weight:400;">400 days</div>
<div class="r" style="left:652px;top:742.3px;width:121.5px;height:2.8px;background:#fde3b8;border-radius:2px;"></div>
<div class="r" style="left:652px;top:742.3px;width:109.5px;height:2.8px;background:#f4a623;border-radius:2px;"></div>
<div class="r" style="left:228px;top:750px;width:699px;height:25px;background:#f4f4f4;"></div>
<div class="t" style="left:237.30px;top:753.60px;font-size:11.093px;line-height:17px;color:#2c3a47;font-weight:400;-webkit-text-stroke:0.2px #2c3a47;">output.security.event.logging</div>
<div class="t" style="left:511.50px;top:753.60px;font-size:10.769px;line-height:16px;color:#4b5763;font-weight:400;">15-09-2023 07:20:55</div>
<div class="t" style="left:652.00px;top:753.70px;font-size:9.400px;line-height:14px;color:#3e4a56;font-weight:400;">90 days</div>
<div class="r" style="left:652px;top:767.3px;width:121.5px;height:2.8px;background:#a9e8c3;border-radius:2px;"></div>
<div class="r" style="left:652px;top:767.3px;width:48.5px;height:2.8px;background:#13945a;border-radius:2px;"></div>
<div class="r" style="left:927px;top:247px;width:6px;height:531px;background:#e9e9e9;border-radius:3px;"></div>
<div class="r" style="left:927px;top:247px;width:6px;height:436px;background:#b0b0b0;border-radius:3px;"></div>
<div class="r" style="left:955px;top:137px;width:313px;height:654px;background:#fff;border-radius:4px;box-shadow:1px 1px 1px rgba(60,80,100,0.18);"></div>
<div class="t" style="left:967.70px;top:149.20px;font-size:9.644px;line-height:14px;color:#6b7681;font-weight:400;">Your plan</div>
<div class="t" style="left:967.70px;top:162.00px;font-size:11.039px;line-height:17px;color:#1d2935;font-weight:400;-webkit-text-stroke:0.45px #1d2935;">Devo® Cloud Enterprise</div>
<div class="t" style="left:1117.80px;top:149.20px;font-size:9.644px;line-height:14px;color:#6b7681;font-weight:400;">Started on</div>
<div class="t" style="left:1117.80px;top:162.00px;font-size:10.609px;line-height:16px;color:#1d2935;font-weight:400;-webkit-text-stroke:0.45px #1d2935;">May 11, 2022</div>
<div class="t" style="left:967.70px;top:193.60px;font-size:10.010px;line-height:15px;color:#6b7681;font-weight:400;">Ingestion limit</div>
<div class="t" style="left:967.70px;top:207.40px;font-size:10.704px;line-height:16px;color:#1d2935;font-weight:400;-webkit-text-stroke:0.45px #1d2935;">16 TB/day</div>
<div class="t" style="left:1117.80px;top:193.60px;font-size:9.852px;line-height:15px;color:#6b7681;font-weight:400;">Retention period</div>
<div class="t" style="left:1117.80px;top:207.40px;font-size:10.915px;line-height:16px;color:#1d2935;font-weight:400;-webkit-text-stroke:0.45px #1d2935;">400 days</div>
<div class="t" style="left:967.70px;top:239.00px;font-size:9.889px;line-height:15px;color:#5d6974;font-weight:400;">Evolution of data ingestion</div>
<svg style="left:0;top:0;font-family:Liberation Sans" width="1" height="1"><line x1="990" y1="262.5" x2="990" y2="361" stroke="#b7c7d6" stroke-width="1" stroke-dasharray="2.5,2.5"/><line x1="1013.75" y1="262.5" x2="1013.75" y2="361" stroke="#b7c7d6" stroke-width="1" stroke-dasharray="2.5,2.5"/><line x1="1038.25" y1="262.5" x2="1038.25" y2="361" stroke="#b7c7d6" stroke-width="1" stroke-dasharray="2.5,2.5"/><line x1="1062.5" y1="262.5" x2="1062.5" y2="361" stroke="#b7c7d6" stroke-width="1" stroke-dasharray="2.5,2.5"/><line x1="1086.25" y1="262.5" x2="1086.25" y2="361" stroke="#b7c7d6" stroke-width="1" stroke-dasharray="2.5,2.5"/><line x1="1110" y1="262.5" x2="1110" y2="361" stroke="#b7c7d6" stroke-width="1" stroke-dasharray="2.5,2.5"/><line x1="1134.25" y1="262.5" x2="1134.25" y2="361" stroke="#b7c7d6" stroke-width="1" stroke-dasharray="2.5,2.5"/><line x1="1158" y1="262.5" x2="1158" y2="361" stroke="#b7c7d6" stroke-width="1" stroke-dasharray="2.5,2.5"/><line x1="1182.5" y1="262.5" x2="1182.5" y2="361" stroke="#b7c7d6" stroke-width="1" stroke-dasharray="2.5,2.5"/><line x1="1207" y1="262.5" x2="1207" y2="361" stroke="#b7c7d6" stroke-width="1" stroke-dasharray="2.5,2.5"/><line x1="1231.25" y1="262.5" x2="1231.25" y2="361" stroke="#b7c7d6" stroke-width="1" stroke-dasharray="2.5,2.5"/><line x1="1255" y1="262.5" x2="1255" y2="361" stroke="#b7c7d6" stroke-width="1" stroke-dasharray="2.5,2.5"/><line x1="984" y1="276.1" x2="1256" y2="276.1" stroke="#b7c7d6" stroke-width="1" stroke-dasharray="2.5,2.5"/><line x1="984" y1="296.5" x2="1256" y2="296.5" stroke="#b7c7d6" stroke-width="1" stroke-dasharray="2.5,2.5"/><line x1="984" y1="337.4" x2="1256" y2="337.4" stroke="#b7c7d6" stroke-width="1" stroke-dasharray="2.5,2.5"/><line x1="984" y1="357.8" x2="1256" y2="357.8" stroke="#b7c7d6" stroke-width="1" stroke-dasharray="2.5,2.5"/><path d="M992.40 316.30 L992.87 309.97 L993.33 305.34 L993.80 301.28 L994.27 297.64 L994.73 294.37 L995.20 291.46 L995.67 288.90 L996.13 286.70 L996.60 284.86 L997.07 283.40 L997.53 282.32 L998.00 281.62 L998.47 281.32 L998.93 281.45 L999.40 282.18 L999.87 283.51 L1000.33 285.41 L1000.80 287.89 L1001.27 290.92 L1001.73 294.50 L1002.20 298.62 L1002.67 303.33 L1003.13 308.79 L1003.60 316.30 ZM1013.20 316.30 L1013.60 309.88 L1013.99 305.21 L1014.39 301.14 L1014.78 297.55 L1015.18 294.38 L1015.58 291.64 L1015.97 289.32 L1016.37 287.43 L1016.76 286.00 L1017.16 285.01 L1017.55 284.49 L1017.95 284.43 L1018.35 284.79 L1018.74 285.56 L1019.14 286.73 L1019.53 288.30 L1019.93 290.26 L1020.33 292.60 L1020.72 295.31 L1021.12 298.39 L1021.51 301.85 L1021.91 305.74 L1022.30 310.20 L1022.70 316.30 ZM1050.60 316.30 L1051.04 308.74 L1051.47 303.24 L1051.91 298.47 L1052.35 294.27 L1052.79 290.59 L1053.22 287.44 L1053.66 284.81 L1054.10 282.72 L1054.54 281.19 L1054.97 280.21 L1055.41 279.81 L1055.85 279.94 L1056.29 280.51 L1056.72 281.52 L1057.16 282.95 L1057.60 284.81 L1058.04 287.08 L1058.47 289.76 L1058.91 292.83 L1059.35 296.30 L1059.79 300.18 L1060.22 304.53 L1060.66 309.50 L1061.10 316.30 ZM1212.20 316.30 L1212.62 313.67 L1213.05 311.75 L1213.48 310.09 L1213.90 308.61 L1214.33 307.32 L1214.75 306.20 L1215.17 305.26 L1215.60 304.49 L1216.03 303.92 L1216.45 303.53 L1216.88 303.33 L1217.30 303.32 L1217.73 303.48 L1218.15 303.80 L1218.58 304.29 L1219.00 304.93 L1219.43 305.73 L1219.85 306.69 L1220.28 307.79 L1220.70 309.04 L1221.12 310.45 L1221.55 312.02 L1221.98 313.83 L1222.40 316.30 ZM1071.00 316.30 L1071.12 315.71 L1071.27 314.91 L1071.45 313.94 L1071.65 312.89 L1071.86 311.80 L1072.08 310.75 L1072.30 309.79 L1072.50 309.00 L1072.68 308.35 L1072.86 307.77 L1073.03 307.26 L1073.20 306.80 L1073.39 306.38 L1073.59 305.98 L1073.83 305.59 L1074.10 305.20 L1074.41 304.90 L1074.76 304.73 L1075.13 304.63 L1075.52 304.52 L1075.93 304.35 L1076.35 304.03 L1076.77 303.51 L1077.20 302.70 L1077.64 301.51 L1078.10 299.97 L1078.57 298.19 L1079.05 296.27 L1079.53 294.36 L1080.00 292.54 L1080.46 290.95 L1080.90 289.70 L1081.31 288.78 L1081.70 288.06 L1082.08 287.52 L1082.45 287.11 L1082.82 286.80 L1083.20 286.53 L1083.59 286.28 L1084.00 286.00 L1084.42 285.77 L1084.85 285.65 L1085.29 285.60 L1085.73 285.57 L1086.19 285.53 L1086.67 285.41 L1087.17 285.19 L1087.70 284.80 L1088.28 284.19 L1088.90 283.36 L1089.56 282.40 L1090.24 281.38 L1090.91 280.38 L1091.55 279.49 L1092.16 278.77 L1092.70 278.30 L1093.17 278.06 L1093.58 277.97 L1093.95 278.02 L1094.29 278.18 L1094.63 278.45 L1094.99 278.82 L1095.37 279.28 L1095.80 279.80 L1096.28 280.48 L1096.80 281.35 L1097.35 282.36 L1097.91 283.44 L1098.48 284.52 L1099.04 285.56 L1099.58 286.47 L1100.10 287.20 L1100.60 287.69 L1101.10 287.99 L1101.60 288.15 L1102.08 288.27 L1102.55 288.41 L1102.99 288.64 L1103.41 289.05 L1103.80 289.70 L1104.14 290.57 L1104.44 291.59 L1104.71 292.73 L1104.96 293.99 L1105.20 295.36 L1105.44 296.82 L1105.71 298.37 L1106.00 300.00 L1106.34 301.86 L1106.72 304.04 L1107.13 306.39 L1107.54 308.79 L1107.93 311.12 L1108.28 313.23 L1108.58 315.00 L1108.80 316.30 ZM1116.20 316.30 L1116.37 315.23 L1116.60 313.75 L1116.88 311.99 L1117.18 310.06 L1117.51 308.07 L1117.84 306.16 L1118.18 304.43 L1118.50 303.00 L1118.82 301.84 L1119.14 300.82 L1119.47 299.92 L1119.80 299.11 L1120.14 298.39 L1120.49 297.73 L1120.84 297.10 L1121.20 296.50 L1121.57 296.03 L1121.95 295.76 L1122.33 295.60 L1122.73 295.47 L1123.12 295.27 L1123.52 294.92 L1123.91 294.32 L1124.30 293.40 L1124.68 292.07 L1125.05 290.38 L1125.42 288.44 L1125.79 286.35 L1126.16 284.22 L1126.55 282.15 L1126.96 280.24 L1127.40 278.60 L1127.87 277.14 L1128.37 275.71 L1128.90 274.35 L1129.44 273.09 L1129.98 271.99 L1130.51 271.06 L1131.02 270.35 L1131.50 269.90 L1131.95 269.68 L1132.39 269.66 L1132.80 269.83 L1133.21 270.20 L1133.61 270.76 L1134.01 271.51 L1134.40 272.46 L1134.80 273.60 L1135.19 275.10 L1135.57 277.04 L1135.95 279.27 L1136.33 281.65 L1136.70 284.03 L1137.09 286.26 L1137.49 288.20 L1137.90 289.70 L1138.35 290.76 L1138.84 291.52 L1139.35 292.05 L1139.87 292.40 L1140.37 292.65 L1140.84 292.85 L1141.25 293.08 L1141.60 293.40 L1141.86 293.72 L1142.06 293.95 L1142.20 294.14 L1142.31 294.31 L1142.40 294.53 L1142.50 294.84 L1142.63 295.28 L1142.80 295.90 L1143.01 296.71 L1143.25 297.66 L1143.50 298.73 L1143.76 299.90 L1144.03 301.14 L1144.30 302.42 L1144.55 303.71 L1144.80 305.00 L1145.05 306.38 L1145.31 307.94 L1145.57 309.57 L1145.82 311.22 L1146.07 312.79 L1146.28 314.22 L1146.46 315.41 L1146.60 316.30 ZM1154.00 316.30 L1154.11 314.84 L1154.25 312.84 L1154.42 310.45 L1154.61 307.83 L1154.82 305.12 L1155.04 302.48 L1155.27 300.05 L1155.50 298.00 L1155.74 296.23 L1156.01 294.56 L1156.29 293.01 L1156.58 291.57 L1156.87 290.26 L1157.15 289.09 L1157.43 288.07 L1157.70 287.20 L1157.95 286.54 L1158.20 286.09 L1158.44 285.81 L1158.67 285.66 L1158.91 285.59 L1159.14 285.55 L1159.37 285.51 L1159.60 285.40 L1159.81 285.30 L1160.00 285.27 L1160.17 285.28 L1160.35 285.30 L1160.55 285.29 L1160.78 285.23 L1161.06 285.08 L1161.40 284.80 L1161.83 284.37 L1162.33 283.80 L1162.88 283.14 L1163.47 282.42 L1164.07 281.69 L1164.65 280.98 L1165.20 280.34 L1165.70 279.80 L1166.15 279.33 L1166.59 278.88 L1167.00 278.46 L1167.40 278.08 L1167.78 277.76 L1168.14 277.51 L1168.48 277.36 L1168.80 277.30 L1169.10 277.29 L1169.36 277.28 L1169.60 277.31 L1169.83 277.44 L1170.05 277.71 L1170.26 278.16 L1170.48 278.85 L1170.70 279.80 L1170.93 281.05 L1171.16 282.56 L1171.39 284.30 L1171.61 286.23 L1171.84 288.30 L1172.06 290.47 L1172.28 292.72 L1172.50 295.00 L1172.73 297.52 L1172.97 300.40 L1173.22 303.48 L1173.46 306.60 L1173.69 309.60 L1173.90 312.33 L1174.07 314.62 L1174.20 316.30 ZM1184.10 316.30 L1184.25 315.39 L1184.44 314.13 L1184.67 312.63 L1184.92 310.99 L1185.20 309.30 L1185.47 307.68 L1185.74 306.21 L1186.00 305.00 L1186.19 304.01 L1186.31 303.14 L1186.40 302.36 L1186.50 301.67 L1186.67 301.06 L1186.94 300.52 L1187.37 300.03 L1188.00 299.60 L1188.91 299.22 L1190.11 298.92 L1191.49 298.68 L1192.96 298.51 L1194.43 298.40 L1195.80 298.35 L1196.99 298.35 L1197.90 298.40 L1198.52 298.49 L1198.95 298.63 L1199.22 298.83 L1199.38 299.07 L1199.47 299.39 L1199.54 299.78 L1199.64 300.25 L1199.80 300.80 L1200.01 301.46 L1200.21 302.24 L1200.40 303.10 L1200.59 304.03 L1200.77 305.01 L1200.95 306.01 L1201.12 307.01 L1201.30 308.00 L1201.48 309.04 L1201.67 310.19 L1201.86 311.40 L1202.04 312.60 L1202.22 313.75 L1202.37 314.78 L1202.50 315.65 L1202.60 316.30 Z" fill="#e2474b"/><path d="M989.40 316.30 L989.40 339.50 L990.20 339.50 L991.00 325.00 L991.80 316.30 ZM1004.20 316.30 L1004.55 322.45 L1004.89 326.59 L1005.24 330.11 L1005.58 333.19 L1005.93 335.90 L1006.28 338.27 L1006.62 340.30 L1006.97 342.00 L1007.31 343.35 L1007.66 344.37 L1008.00 345.04 L1008.35 345.37 L1008.70 345.34 L1009.04 344.91 L1009.39 344.08 L1009.73 342.85 L1010.08 341.23 L1010.42 339.23 L1010.77 336.83 L1011.12 334.04 L1011.46 330.83 L1011.81 327.15 L1012.15 322.80 L1012.50 316.30 ZM1023.10 316.30 L1023.20 317.20 L1023.34 318.39 L1023.50 319.80 L1023.68 321.38 L1023.87 323.05 L1024.07 324.75 L1024.29 326.42 L1024.50 328.00 L1024.71 329.58 L1024.93 331.28 L1025.16 333.03 L1025.39 334.77 L1025.64 336.44 L1025.91 337.98 L1026.19 339.32 L1026.50 340.40 L1026.83 341.18 L1027.19 341.68 L1027.57 341.99 L1027.96 342.17 L1028.37 342.28 L1028.78 342.39 L1029.19 342.58 L1029.60 342.90 L1030.01 343.34 L1030.41 343.81 L1030.83 344.32 L1031.24 344.86 L1031.67 345.40 L1032.10 345.94 L1032.54 346.48 L1033.00 347.00 L1033.48 347.55 L1033.98 348.17 L1034.50 348.81 L1035.03 349.44 L1035.55 350.02 L1036.06 350.49 L1036.54 350.84 L1037.00 351.00 L1037.42 350.98 L1037.82 350.82 L1038.19 350.53 L1038.55 350.14 L1038.90 349.67 L1039.26 349.15 L1039.62 348.58 L1040.00 348.00 L1040.39 347.36 L1040.77 346.61 L1041.16 345.79 L1041.56 344.93 L1041.95 344.06 L1042.36 343.21 L1042.77 342.41 L1043.20 341.70 L1043.65 341.06 L1044.14 340.46 L1044.64 339.90 L1045.15 339.37 L1045.64 338.86 L1046.11 338.36 L1046.53 337.88 L1046.90 337.40 L1047.20 337.03 L1047.45 336.82 L1047.66 336.69 L1047.84 336.54 L1048.00 336.28 L1048.16 335.83 L1048.32 335.10 L1048.50 334.00 L1048.70 332.35 L1048.92 330.17 L1049.14 327.63 L1049.35 324.94 L1049.55 322.27 L1049.73 319.82 L1049.88 317.76 L1050.00 316.30 ZM1061.70 316.30 L1062.05 320.20 L1062.40 323.04 L1062.75 325.48 L1063.10 327.62 L1063.45 329.47 L1063.80 331.03 L1064.15 332.29 L1064.50 333.25 L1064.85 333.91 L1065.20 334.25 L1065.55 334.28 L1065.90 334.10 L1066.25 333.72 L1066.60 333.15 L1066.95 332.38 L1067.30 331.43 L1067.65 330.30 L1068.00 328.98 L1068.35 327.49 L1068.70 325.82 L1069.05 323.96 L1069.40 321.89 L1069.75 319.53 L1070.10 316.30 ZM1110.00 316.30 L1110.21 316.80 L1110.42 317.22 L1110.62 317.61 L1110.83 317.96 L1111.04 318.28 L1111.25 318.57 L1111.46 318.82 L1111.67 319.02 L1111.88 319.19 L1112.08 319.30 L1112.29 319.38 L1112.50 319.40 L1112.71 319.38 L1112.92 319.30 L1113.12 319.19 L1113.33 319.02 L1113.54 318.82 L1113.75 318.57 L1113.96 318.28 L1114.17 317.96 L1114.38 317.61 L1114.58 317.22 L1114.79 316.80 L1115.00 316.30 ZM1147.80 316.30 L1148.00 316.88 L1148.21 317.38 L1148.41 317.83 L1148.62 318.25 L1148.82 318.63 L1149.03 318.97 L1149.23 319.27 L1149.43 319.51 L1149.64 319.71 L1149.84 319.86 L1150.05 319.96 L1150.25 320.00 L1150.45 319.98 L1150.66 319.91 L1150.86 319.78 L1151.07 319.59 L1151.27 319.34 L1151.47 319.05 L1151.68 318.70 L1151.88 318.32 L1152.09 317.89 L1152.29 317.42 L1152.50 316.90 L1152.70 316.30 ZM1175.00 316.30 L1175.34 321.64 L1175.67 325.22 L1176.01 328.26 L1176.35 330.92 L1176.69 333.26 L1177.03 335.29 L1177.36 337.01 L1177.70 338.44 L1178.04 339.56 L1178.38 340.38 L1178.71 340.90 L1179.05 341.10 L1179.39 340.98 L1179.72 340.54 L1180.06 339.78 L1180.40 338.69 L1180.74 337.28 L1181.07 335.56 L1181.41 333.53 L1181.75 331.17 L1182.09 328.47 L1182.42 325.38 L1182.76 321.74 L1183.10 316.30 ZM1203.50 316.30 L1203.83 318.32 L1204.15 319.80 L1204.47 321.08 L1204.80 322.21 L1205.12 323.20 L1205.45 324.05 L1205.78 324.77 L1206.10 325.34 L1206.42 325.77 L1206.75 326.06 L1207.08 326.19 L1207.40 326.18 L1207.72 326.04 L1208.05 325.78 L1208.38 325.40 L1208.70 324.91 L1209.02 324.29 L1209.35 323.57 L1209.67 322.73 L1210.00 321.78 L1210.33 320.72 L1210.65 319.53 L1210.97 318.17 L1211.30 316.30 ZM1223.70 316.30 L1223.91 316.43 L1224.18 316.60 L1224.50 316.79 L1224.86 317.02 L1225.24 317.27 L1225.63 317.55 L1226.02 317.86 L1226.40 318.20 L1226.77 318.53 L1227.15 318.85 L1227.53 319.18 L1227.93 319.55 L1228.32 319.98 L1228.72 320.50 L1229.11 321.13 L1229.50 321.90 L1229.89 322.86 L1230.28 324.01 L1230.66 325.29 L1231.05 326.66 L1231.44 328.04 L1231.82 329.40 L1232.21 330.67 L1232.60 331.80 L1232.99 332.82 L1233.38 333.80 L1233.76 334.74 L1234.15 335.62 L1234.54 336.46 L1234.92 337.23 L1235.31 337.95 L1235.70 338.60 L1236.08 339.13 L1236.46 339.51 L1236.84 339.79 L1237.21 340.04 L1237.59 340.30 L1237.98 340.62 L1238.38 341.07 L1238.80 341.70 L1239.24 342.54 L1239.70 343.56 L1240.17 344.71 L1240.65 345.92 L1241.13 347.14 L1241.60 348.32 L1242.06 349.39 L1242.50 350.30 L1242.91 351.11 L1243.29 351.90 L1243.65 352.64 L1244.01 353.31 L1244.38 353.88 L1244.75 354.32 L1245.16 354.60 L1245.60 354.70 L1246.08 354.60 L1246.57 354.30 L1247.09 353.85 L1247.63 353.27 L1248.18 352.60 L1248.75 351.86 L1249.32 351.08 L1249.90 350.30 L1250.53 349.42 L1251.22 348.37 L1251.94 347.21 L1252.67 346.03 L1253.36 344.87 L1253.99 343.82 L1254.51 342.94 L1254.90 342.30 L1255.10 342.00 L1255.10 316.30 Z" fill="#6b94b6"/><line x1="990" y1="262.5" x2="990" y2="361" stroke="#e8eef3" stroke-opacity="0.45" stroke-width="1" stroke-dasharray="2.5,2.5"/><line x1="1013.75" y1="262.5" x2="1013.75" y2="361" stroke="#e8eef3" stroke-opacity="0.45" stroke-width="1" stroke-dasharray="2.5,2.5"/><line x1="1038.25" y1="262.5" x2="1038.25" y2="361" stroke="#e8eef3" stroke-opacity="0.45" stroke-width="1" stroke-dasharray="2.5,2.5"/><line x1="1062.5" y1="262.5" x2="1062.5" y2="361" stroke="#e8eef3" stroke-opacity="0.45" stroke-width="1" stroke-dasharray="2.5,2.5"/><line x1="1086.25" y1="262.5" x2="1086.25" y2="361" stroke="#e8eef3" stroke-opacity="0.45" stroke-width="1" stroke-dasharray="2.5,2.5"/><line x1="1110" y1="262.5" x2="1110" y2="361" stroke="#e8eef3" stroke-opacity="0.45" stroke-width="1" stroke-dasharray="2.5,2.5"/><line x1="1134.25" y1="262.5" x2="1134.25" y2="361" stroke="#e8eef3" stroke-opacity="0.45" stroke-width="1" stroke-dasharray="2.5,2.5"/><line x1="1158" y1="262.5" x2="1158" y2="361" stroke="#e8eef3" stroke-opacity="0.45" stroke-width="1" stroke-dasharray="2.5,2.5"/><line x1="1182.5" y1="262.5" x2="1182.5" y2="361" stroke="#e8eef3" stroke-opacity="0.45" stroke-width="1" stroke-dasharray="2.5,2.5"/><line x1="1207" y1="262.5" x2="1207" y2="361" stroke="#e8eef3" stroke-opacity="0.45" stroke-width="1" stroke-dasharray="2.5,2.5"/><line x1="1231.25" y1="262.5" x2="1231.25" y2="361" stroke="#e8eef3" stroke-opacity="0.45" stroke-width="1" stroke-dasharray="2.5,2.5"/><line x1="1255" y1="262.5" x2="1255" y2="361" stroke="#e8eef3" stroke-opacity="0.45" stroke-width="1" stroke-dasharray="2.5,2.5"/><line x1="984" y1="276.1" x2="1256" y2="276.1" stroke="#e8eef3" stroke-opacity="0.45" stroke-width="1" stroke-dasharray="2.5,2.5"/><line x1="984" y1="296.5" x2="1256" y2="296.5" stroke="#e8eef3" stroke-opacity="0.45" stroke-width="1" stroke-dasharray="2.5,2.5"/><line x1="984" y1="337.4" x2="1256" y2="337.4" stroke="#e8eef3" stroke-opacity="0.45" stroke-width="1" stroke-dasharray="2.5,2.5"/><line x1="984" y1="357.8" x2="1256" y2="357.8" stroke="#e8eef3" stroke-opacity="0.45" stroke-width="1" stroke-dasharray="2.5,2.5"/><text x="972.1" y="262.5" font-size="7.4" font-weight="700" fill="#2b3540">TB</text><text x="982" y="279.2" font-size="8.2" text-anchor="end" font-weight="400" fill="#6d7883">50</text><text x="982" y="299.2" font-size="8.2" text-anchor="end" font-weight="400" fill="#6d7883">10</text><text x="982" y="319.2" font-size="8.2" text-anchor="end" font-weight="700" fill="#222b33">16</text><text x="982" y="339.9" font-size="8.2" text-anchor="end" font-weight="400" fill="#6d7883">-30</text><text x="982" y="360.6" font-size="8.2" text-anchor="end" font-weight="400" fill="#6d7883">-50</text><text x="988.75" y="374.2" font-size="8.4" text-anchor="middle" fill="#6d7883">Jan</text><text x="1037.5" y="374.2" font-size="8.4" text-anchor="middle" fill="#6d7883">Mar</text><text x="1085.5" y="374.2" font-size="8.4" text-anchor="middle" fill="#6d7883">May</text><text x="1134.25" y="374.2" font-size="8.4" text-anchor="middle" fill="#6d7883">Jul</text><text x="1182" y="374.2" font-size="8.4" text-anchor="middle" fill="#6d7883">Sep</text><text x="1230.75" y="374.2" font-size="8.4" text-anchor="middle" fill="#6d7883">Nov</text></svg>
<div class="t" style="left:967.50px;top:392.00px;font-size:9.660px;line-height:14px;color:#5d6974;font-weight:400;">Data over-storage estimation (1 year)</div>
<svg style="left:0;top:0;font-family:Liberation Sans" width="1" height="1"><rect x="985" y="415.75" width="107" height="55.5" fill="#c5dcea"/><defs><clipPath id="cpT"><rect x="985" y="400" width="107" height="80"/></clipPath><clipPath id="cpR"><rect x="1092" y="400" width="120" height="80"/></clipPath><clipPath id="cpRed"><path d="M987.5 471.25 C990.5 466.5 994.5 463.8 1000 463.5 C1010 463 1022 462.5 1029.6 461.8 C1036 460.8 1039 455 1043 449 C1047 443 1052 440.2 1060 438.9 C1064 438.4 1070 438.4 1075 438.4 L1130 438.4 C1136 438 1139 436 1142 433 C1146 430 1152 429 1160 428.75 C1175 427.8 1190 427.5 1205 427.5 L1205 471.25 Z"/></clipPath></defs><g stroke="#a9c2d6" stroke-width="1"><line x1="985" y1="416" x2="985" y2="479" stroke-dasharray="2,3"/><line x1="1004.5" y1="416" x2="1004.5" y2="479" stroke-dasharray="2,3"/><line x1="1024.5" y1="416" x2="1024.5" y2="479" stroke-dasharray="2,3"/><line x1="1044.5" y1="416" x2="1044.5" y2="479" stroke-dasharray="2,3"/><line x1="1064.5" y1="416" x2="1064.5" y2="479" stroke-dasharray="2,3"/><line x1="1084.5" y1="416" x2="1084.5" y2="479" stroke-dasharray="2,3"/><line x1="1105" y1="416" x2="1105" y2="479" stroke-dasharray="2,3"/><line x1="1125" y1="416" x2="1125" y2="479" stroke-dasharray="2,3"/><line x1="1145" y1="416" x2="1145" y2="479" stroke-dasharray="2,3"/><line x1="1165" y1="416" x2="1165" y2="479" stroke-dasharray="2,3"/><line x1="1185" y1="416" x2="1185" y2="479" stroke-dasharray="2,3"/><line x1="1205" y1="416" x2="1205" y2="479" stroke-dasharray="2,3"/><line x1="981" y1="431.25" x2="1206" y2="431.25" stroke-dasharray="2.5,2.5"/><line x1="981" y1="451.25" x2="1206" y2="451.25" stroke-dasharray="2.5,2.5"/></g><path d="M987.5 471.25 C990.5 466.5 994.5 463.8 1000 463.5 C1010 463 1022 462.5 1029.6 461.8 C1036 460.8 1039 455 1043 449 C1047 443 1052 440.2 1060 438.9 C1064 438.4 1070 438.4 1075 438.4 L1130 438.4 C1136 438 1139 436 1142 433 C1146 430 1152 429 1160 428.75 C1175 427.8 1190 427.5 1205 427.5 L1205 471.25 Z" fill="#ad6a72" clip-path="url(#cpT)"/><path d="M987.5 471.25 C990.5 466.5 994.5 463.8 1000 463.5 C1010 463 1022 462.5 1029.6 461.8 C1036 460.8 1039 455 1043 449 C1047 443 1052 440.2 1060 438.9 C1064 438.4 1070 438.4 1075 438.4 L1130 438.4 C1136 438 1139 436 1142 433 C1146 430 1152 429 1160 428.75 C1175 427.8 1190 427.5 1205 427.5 L1205 471.25 Z" fill="#e3655a" clip-path="url(#cpR)"/><g stroke="#ffffff" stroke-opacity="0.5" stroke-width="1" clip-path="url(#cpRed)"><line x1="985" y1="416" x2="985" y2="479" stroke-dasharray="2,3"/><line x1="1004.5" y1="416" x2="1004.5" y2="479" stroke-dasharray="2,3"/><line x1="1024.5" y1="416" x2="1024.5" y2="479" stroke-dasharray="2,3"/><line x1="1044.5" y1="416" x2="1044.5" y2="479" stroke-dasharray="2,3"/><line x1="1064.5" y1="416" x2="1064.5" y2="479" stroke-dasharray="2,3"/><line x1="1084.5" y1="416" x2="1084.5" y2="479" stroke-dasharray="2,3"/><line x1="1105" y1="416" x2="1105" y2="479" stroke-dasharray="2,3"/><line x1="1125" y1="416" x2="1125" y2="479" stroke-dasharray="2,3"/><line x1="1145" y1="416" x2="1145" y2="479" stroke-dasharray="2,3"/><line x1="1165" y1="416" x2="1165" y2="479" stroke-dasharray="2,3"/><line x1="1185" y1="416" x2="1185" y2="479" stroke-dasharray="2,3"/><line x1="1205" y1="416" x2="1205" y2="479" stroke-dasharray="2,3"/><line x1="981" y1="431.25" x2="1206" y2="431.25" stroke-dasharray="2.5,2.5"/><line x1="981" y1="451.25" x2="1206" y2="451.25" stroke-dasharray="2.5,2.5"/></g><line x1="981" y1="471.25" x2="1206" y2="471.25" stroke="#dfe6ec" stroke-width="1" stroke-dasharray="2,3"/><text x="968" y="417.5" font-size="7.4" font-weight="700" fill="#2b3540">TB</text><text x="978" y="434.2" font-size="8.2" text-anchor="end" fill="#6d7883">20</text><text x="978" y="454.2" font-size="8.2" text-anchor="end" fill="#6d7883">10</text><text x="978" y="474.7" font-size="8.2" text-anchor="end" fill="#6d7883">0</text><text x="1088.5" y="427.3" font-size="8" font-weight="700" text-anchor="end" fill="#2b3540">Today</text><text x="984.5" y="487.4" font-size="8.4" text-anchor="middle" fill="#6d7883">Jan</text><text x="1023" y="487.4" font-size="8.4" text-anchor="middle" fill="#6d7883">Mar</text><text x="1064.25" y="487.4" font-size="8.4" text-anchor="middle" fill="#6d7883">May</text><text x="1104.25" y="487.4" font-size="8.4" text-anchor="middle" fill="#6d7883">Jul</text><text x="1144.25" y="487.4" font-size="8.4" text-anchor="middle" fill="#6d7883">Sep</text><text x="1185" y="487.4" font-size="8.4" text-anchor="middle" fill="#6d7883">Nov</text><text x="1237" y="414.2" font-size="8" font-weight="700" text-anchor="middle" fill="#2b3540">245</text><rect x="1229.5" y="420" width="16" height="52.5" rx="8" fill="#f4f5f6" stroke="#d3d7db" stroke-width="1"/><rect x="1235" y="428" width="5" height="37.5" fill="#f5b242" stroke="#8d6b2f" stroke-width="0.8"/><text x="1237" y="483.3" font-size="8" text-anchor="middle" fill="#6d7883">Estimate</text><text x="1237" y="490.8" font-size="8" text-anchor="middle" fill="#6d7883">excess</text></svg>
<div class="t" style="left:967.50px;top:509.00px;font-size:9.920px;line-height:15px;color:#5d6974;font-weight:400;">Data retention distribution by tables</div>
<svg style="left:0;top:0;font-family:Liberation Sans" width="1" height="1"><defs><filter id="sh" x="-20%" y="-20%" width="140%" height="140%"><feGaussianBlur stdDeviation="2.5"/></filter></defs><circle cx="1187.4" cy="584.85" r="55" fill="none" stroke="#000" stroke-opacity="0.06" stroke-width="4" filter="url(#sh)"/><circle cx="1187.4" cy="583.35" r="46.6" fill="none" stroke="#dfe8f0" stroke-width="8.5"/><path d="M1194.07 529.06 A54.7 54.7 0 0 1 1233.28 613.14 L1217.84 603.12 A36.3 36.3 0 0 0 1191.82 547.32 Z" fill="#4778a0"/><path d="M1220.32 627.04 A54.7 54.7 0 0 1 1133.37 574.79 L1151.55 577.67 A36.3 36.3 0 0 0 1209.25 612.34 Z" fill="#2b8449"/><path d="M1138.24 559.37 A54.7 54.7 0 0 1 1181.68 528.95 L1183.61 547.25 A36.3 36.3 0 0 0 1154.77 567.44 Z" fill="#de1d1f"/><text x="1188.6000000000001" y="584" font-size="12.3" font-weight="400" text-anchor="middle" fill="#1d2630" stroke="#1d2630" stroke-width="0.35" textLength="47.5">10,3 mo.</text><text x="1188.9" y="597" font-size="9.6" text-anchor="middle" fill="#6b7681">average</text><circle cx="971.25" cy="534.5" r="3.6" fill="#df1f22"/><circle cx="971.25" cy="572.5" r="3.6" fill="#4778a0"/><circle cx="971.25" cy="609.5" r="3.6" fill="#2b8449"/></svg>
<div class="t" style="left:982.00px;top:527.00px;font-size:9.828px;line-height:15px;color:#6b7681;font-weight:400;">Tables <span style="color:#f06a6a">over</span> contract period</div>
<div class="t" style="left:982.00px;top:542.50px;font-size:10.000px;line-height:15px;color:#555f6a;font-weight:400;"><b style="color:#1d2630">16</b> (11,2%)</div>
<div class="t" style="left:982.00px;top:565.00px;font-size:9.826px;line-height:15px;color:#6b7681;font-weight:400;">Tables <span style="color:#4c7fd1">under</span> contract period</div>
<div class="t" style="left:982.00px;top:580.00px;font-size:10.000px;line-height:15px;color:#555f6a;font-weight:400;"><b style="color:#1d2630">34</b> (40,72%)</div>
<div class="t" style="left:982.00px;top:602.00px;font-size:9.921px;line-height:15px;color:#6b7681;font-weight:400;">Tables <span style="color:#55c27a">with</span> contracted period</div>
<div class="t" style="left:982.00px;top:617.00px;font-size:10.000px;line-height:15px;color:#555f6a;font-weight:400;"><b style="color:#1d2630">40</b> (49,72%)</div>
</body></html>
